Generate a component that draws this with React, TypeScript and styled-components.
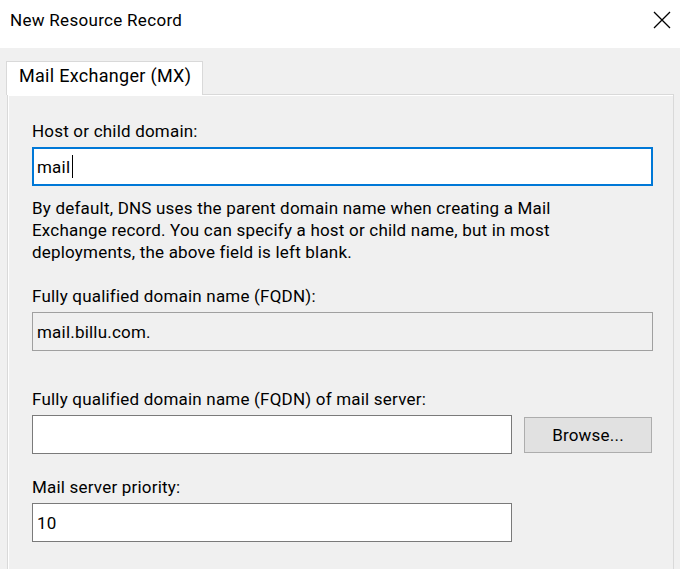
import styled, { createGlobalStyle } from 'styled-components';

const GlobalStyle = createGlobalStyle`
  html, body {
    margin: 0;
    padding: 0;
    background: #f0f0f0;
    overflow: hidden;
  }
  body {
    font-family: Roboto, "Liberation Sans", Arial, sans-serif;
    color: #000;
  }
`;

const Window = styled.div`
  width: 680px;
  height: 569px;
  display: flex;
  flex-direction: column;
  background: #f0f0f0;
`;

const TitleBar = styled.div`
  height: 48px;
  background: #ffffff;
  display: flex;
  align-items: center;
  justify-content: space-between;
  padding: 0 3px 8px 10px;
  box-sizing: border-box;
`;

const Title = styled.span`
  font-size: 17px;
  letter-spacing: 0.3px;
  color: #000;
`;

const CloseButton = styled.button`
  width: 30px;
  height: 30px;
  border: none;
  background: transparent;
  padding: 0;
  display: flex;
  align-items: center;
  justify-content: center;
`;

const Body = styled.div`
  flex: 1;
  padding: 13px 6px 0 6px;
  display: flex;
  flex-direction: column;
`;

const TabStrip = styled.div`
  display: flex;
  height: 34px;
  margin-bottom: -1px;
  position: relative;
  z-index: 1;
`;

const Tab = styled.div`
  width: 197px;
  box-sizing: border-box;
  border: 1px solid #d9d9d9;
  border-bottom: none;
  background: #ffffff;
  padding: 3px 0 0 12px;
  font-size: 18px;
  letter-spacing: 0.3px;
  line-height: 21px;
  color: #000;
`;

const Panel = styled.div`
  flex: 1;
  margin-left: 1px;
  border: 1px solid #d9d9d9;
  border-bottom: none;
  box-shadow: inset 1px 1px 0 #ffffff;
  padding: 26px 19px 0 24px;
  display: flex;
  flex-direction: column;
  letter-spacing: 0.2px;
`;

const Label = styled.div<{ $top?: number }>`
  font-size: 17px;
  line-height: 20px;
  color: #000;
  margin-top: ${p => p.$top ?? 0}px;
  margin-bottom: 6px;
`;

const Field = styled.div<{ $width?: number; $focused?: boolean; $readOnly?: boolean }>`
  width: ${p => p.$width ?? 621}px;
  height: 39px;
  box-sizing: border-box;
  border: ${p => (p.$focused ? '2px solid #0078d7' : '1px solid #7a7a7a')};
  border-color: ${p => (p.$readOnly ? '#a0a0a0' : undefined)};
  background: ${p => (p.$readOnly ? '#f0f0f0' : '#ffffff')};
  display: flex;
  align-items: center;
  padding-left: ${p => (p.$focused ? 3 : 4)}px;
  font-size: 17px;
  color: #000;
`;

const Caret = styled.span`
  display: inline-block;
  width: 1px;
  height: 23px;
  background: #000;
  margin-left: 2px;
`;

const Description = styled.p`
  margin: 11px 0 0;
  font-size: 17px;
  line-height: 22px;
  color: #000;
`;

const Row = styled.div`
  display: flex;
  align-items: center;
  gap: 12px;
`;

const Button = styled.button`
  width: 128px;
  height: 36px;
  background: #e1e1e1;
  border: 1px solid #adadad;
  font-family: inherit;
  font-size: 17px;
  letter-spacing: 0.2px;
  color: #000;
  padding: 0;
`;

export default function App() {
  return (
    <>
      <GlobalStyle />
      <Window>
        <TitleBar>
          <Title>New Resource Record</Title>
          <CloseButton aria-label="Close">
            <svg width="18" height="18" viewBox="0 0 18 18">
              <path d="M1 1 L17 17 M17 1 L1 17" stroke="#000" strokeWidth="1.3" />
            </svg>
          </CloseButton>
        </TitleBar>
        <Body>
          <TabStrip>
            <Tab>Mail Exchanger (MX)</Tab>
          </TabStrip>
          <Panel>
            <Label>Host or child domain:</Label>
            <Field $focused>
              mail
              <Caret />
            </Field>
            <Description>
              By default, DNS uses the parent domain name when creating a Mail
              <br />
              Exchange record. You can specify a host or child name, but in most
              <br />
              deployments, the above field is left blank.
            </Description>
            <Label $top={23}>Fully qualified domain name (FQDN):</Label>
            <Field $readOnly>mail.billu.com.</Field>
            <Label $top={38}>Fully qualified domain name (FQDN) of mail server:</Label>
            <Row>
              <Field $width={480} />
              <Button>Browse...</Button>
            </Row>
            <Label $top={23}>Mail server priority:</Label>
            <Field $width={480}>10</Field>
          </Panel>
        </Body>
      </Window>
    </>
  );
}
